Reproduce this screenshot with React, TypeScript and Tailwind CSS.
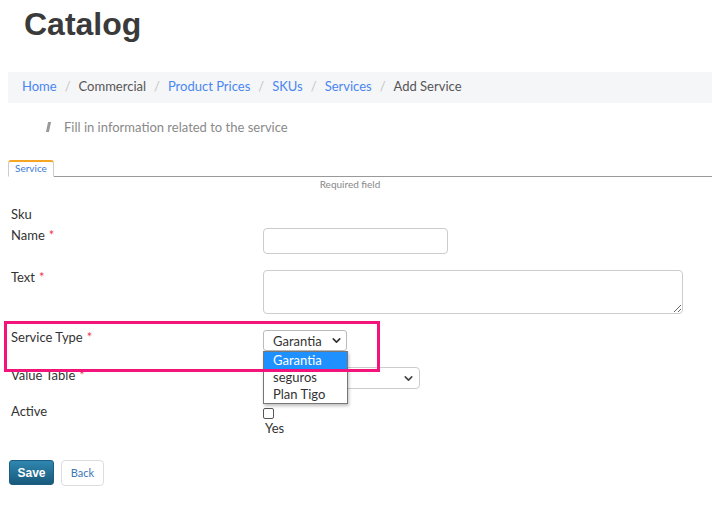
import { ChevronDown } from "lucide-react";

const crumbs = [
	{ label: "Home", link: true },
	{ label: "Commercial", link: false },
	{ label: "Product Prices", link: true },
	{ label: "SKUs", link: true },
	{ label: "Services", link: true },
	{ label: "Add Service", link: false },
];

const Req = () => <span className="ml-1 text-[#e8384f]">*</span>;

export default function App() {
	return (
		<div
			className="relative h-[530px] w-[712px] overflow-hidden bg-white text-[13px] text-[#333] leading-[16px]"
			style={{ fontFamily: "Lato, 'Open Sans', sans-serif" }}
		>
			<h1 className="px-6 pt-[4px] font-bold text-[32px] text-[#3a3a3a] leading-[40px] [font-family:'Liberation_Sans',Arial,sans-serif]">
				Catalog
			</h1>

			{/* breadcrumb */}
			<nav className="mt-[28px] ml-2 flex h-[31px] items-center bg-[#f5f6f8] pb-[3px] pl-[14px] text-[13px]">
				{crumbs.map((c, i) => (
					<span key={c.label} className="flex items-center">
						{i > 0 && <span className="mx-[8px] text-[#c4c4c4]">/</span>}
						<span className={c.link ? "text-[#4a86f0]" : "text-[#555]"}>{c.label}</span>
					</span>
				))}
			</nav>

			<div className="mt-[16px] flex items-center pl-[47px] text-[#8a8a8a]">
				<span className="mr-[14px] h-[10px] w-[3px] -skew-x-12 bg-[#9a9a9a]" />
				Fill in information related to the service
			</div>

			{/* tabs */}
			<div className="mt-[25px] ml-2 flex items-end border-b border-[#999]">
				<div className="-mb-px rounded-t-[3px] border border-b-white border-[#ccc] border-t-2 border-t-[#f5a623] bg-white px-[6px] pb-[1px] text-[10px] text-[#3a7bd5] leading-[13px]">
					Service
				</div>
			</div>
			<div className="text-center text-[10px] text-[#888] leading-[14px] -translate-x-[6px]">Required field</div>

			{/* form */}
			<div className="mt-[15px] grid grid-cols-[252px_1fr] pl-[11px]">
				<div className="col-span-2 h-[16px]">Sku</div>

				<div className="pt-[5px]">
					Name
					<Req />
				</div>
				<div className="pt-[6px]">
					<input className="block h-[26px] w-[185px] rounded-[4px] border border-[#ccc]" />
				</div>

				<div className="pt-[15px]">
					Text
					<Req />
				</div>
				<div className="pt-[16px]">
					<textarea className="block h-[44px] w-[420px] rounded-[4px] border border-[#ccc]" />
				</div>

				<div className="pt-[15px]">
					Service Type
					<Req />
				</div>
				<div className="pt-[16px]">
					<div className="flex h-[21px] w-[84px] items-center justify-between rounded-[3px] border border-[#bbb] pr-[3px] pl-[9px]">
						<span>Garantia</span>
						<ChevronDown className="h-[13px] w-[13px]" strokeWidth={3} />
					</div>
				</div>

				<div className="pt-[16px]">
					Value Table
					<Req />
				</div>
				<div className="pt-[16px]">
					<div className="flex h-[22px] w-[157px] items-center justify-end rounded-[4px] border border-[#ccc] pr-[4px]">
						<ChevronDown className="h-[13px] w-[13px] text-[#444]" strokeWidth={3} />
					</div>
				</div>

				<div className="pt-[14px]">Active</div>
				<div className="pt-[19px]">
					<div className="h-[11px] w-[11px] rounded-[2px] border border-[#555]" />
					<div className="mt-[1px] ml-[2px]">Yes</div>
				</div>
			</div>

			<div className="mt-[24px] ml-[9px] flex gap-[7px]">
				<button
					type="button"
					className="h-[25px] w-[45px] rounded-[3px] border border-[#1d5e80] bg-gradient-to-b from-[#2f87b0] to-[#185a7c] font-bold text-[12px] text-white [font-family:'Liberation_Sans',Arial,sans-serif]"
				>
					Save
				</button>
				<button
					type="button"
					className="h-[26px] w-[43px] rounded-[4px] border border-[#ddd] bg-white text-[11px] text-[#3a78b5]"
				>
					Back
				</button>
			</div>

			{/* open dropdown */}
			<div className="absolute top-[351px] left-[263px] w-[85px] border border-[#777] bg-white leading-[17px] shadow-[1px_2px_3px_rgba(0,0,0,0.25)]">
				<div className="bg-[#1e90ff] pl-[9px] text-white">Garantia</div>
				<div className="pl-[9px]">seguros</div>
				<div className="pl-[9px]">Plan Tigo</div>
			</div>

			{/* highlight */}
			<div className="pointer-events-none absolute top-[321px] left-[4px] h-[51px] w-[376px] border-[3px] border-[#f3137b]" />
		</div>
	);
}
